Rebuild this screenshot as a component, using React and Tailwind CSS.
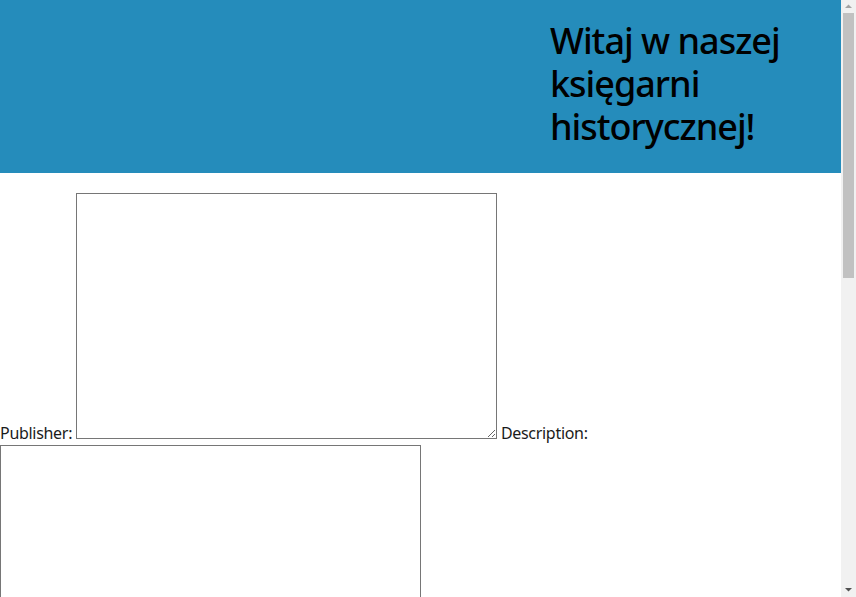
export default function App() {
  return (
    <div className="h-screen flex overflow-hidden bg-white" style={{ fontFamily: '"Noto Sans", "Open Sans", sans-serif' }}>
      <div className="flex-1 min-w-0">
        <header className="h-[173px] bg-[#258cbb] flex">
          <h1 className="ml-[550px] mt-[19px] w-[260px] text-[36px] leading-[43px] font-medium tracking-[-1px] text-black">
            Witaj w naszej księgarni historycznej!
          </h1>
        </header>
        <div className="pt-[20px] text-[16px] tracking-[-0.3px] text-[#1b1b1b]">
          <label>Publisher:</label>{' '}
          <textarea className="w-[421px] h-[246px] border border-[#767676] align-baseline bg-white" />{' '}
          <label>Description:</label>{' '}
          <textarea className="w-[421px] h-[246px] border border-[#767676] align-baseline bg-white" />
        </div>
      </div>
      <div className="w-[15px] shrink-0 bg-[#f1f1f1] flex flex-col items-center">
        <svg width="15" height="13" viewBox="0 0 15 13" className="shrink-0">
          <polygon points="4,8 11,8 7.5,4.5" fill="#a3a3a3" />
        </svg>
        <div className="w-[11px] h-[265px] bg-[#c1c1c1]" />
        <div className="flex-1" />
        <svg width="15" height="15" viewBox="0 0 15 15" className="shrink-0">
          <polygon points="4,6 11,6 7.5,9.5" fill="#505050" />
        </svg>
      </div>
    </div>
  );
}
